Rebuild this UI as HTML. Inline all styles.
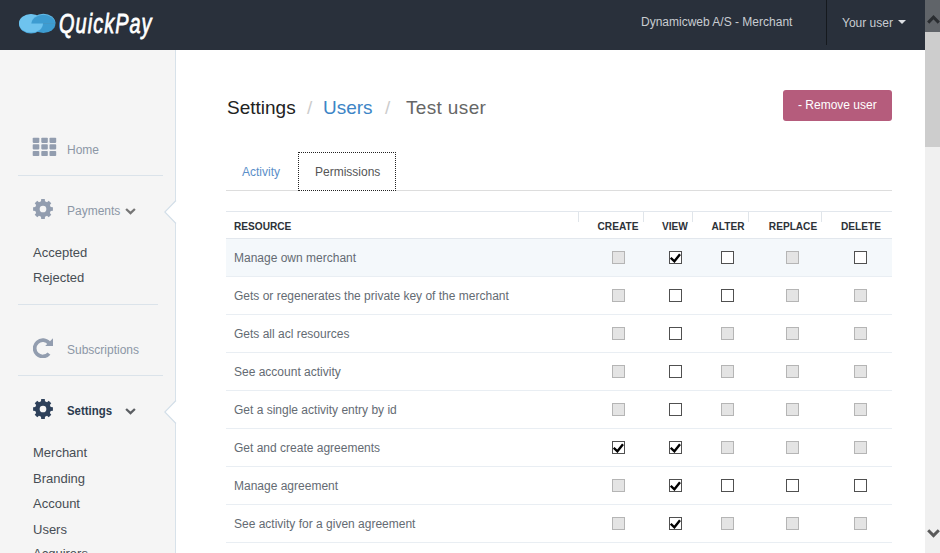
<!DOCTYPE html>
<html><head><meta charset="utf-8">
<style>
*{margin:0;padding:0;box-sizing:border-box}
html,body{width:940px;height:553px;overflow:hidden;background:#fff;font-family:"Liberation Sans",sans-serif}
.abs{position:absolute}
.t{position:absolute;white-space:nowrap;line-height:1}
#hdr{position:absolute;left:0;top:0;width:925px;height:50px;background:#29303b}
#side{position:absolute;left:0;top:50px;width:176px;height:503px;background:#f5f5f5;border-right:1px solid #d8e2ea}
.sep{position:absolute;left:18px;height:1px;background:#dbe3ea}
.nav{position:absolute;left:67px;font-size:12px;color:#8c97a6;white-space:nowrap;line-height:1}
.sub{position:absolute;left:33px;font-size:13px;color:#474d54;white-space:nowrap;line-height:1}
#sb{position:absolute;left:925px;top:0;width:15px;height:553px;background:#f0f0f0}
.row{position:absolute;left:226px;width:666px;height:38px;border-bottom:1px solid #e9eef3}
.rt{position:absolute;left:8px;top:13px;font-size:12px;color:#646b73;white-space:nowrap;line-height:1}
.cb{position:absolute;top:12px;width:13px;height:13px;border:1px solid #505050;background:#fff}
.cb.d{border-color:#b5b5b5;background:#e4e4e4}
.cb svg{position:absolute;left:0;top:0}
.hd{position:absolute;top:221px;width:80px;text-align:center;font-size:11px;font-weight:bold;color:#2d3238;white-space:nowrap;line-height:1;transform:scaleX(0.92)}
.vs{position:absolute;top:212px;width:1px;height:10px;background:#e0e5ea}
</style></head><body>
<div id="hdr">
  <svg class="abs" style="left:18px;top:13px" width="39" height="21" viewBox="0 0 39 21">
    <defs><clipPath id="lo"><rect x="0" y="10.6" width="39" height="12"/></clipPath><clipPath id="up"><rect x="0" y="-1" width="39" height="11.6"/></clipPath></defs>
    <g clip-path="url(#lo)"><ellipse cx="25.4" cy="10.5" rx="12" ry="9.6" fill="#3d9cd1"/></g>
    <ellipse cx="13" cy="11" rx="12" ry="9.4" fill="#4aa5d9"/>
    <ellipse cx="13" cy="10.3" rx="12" ry="9.3" fill="#6ec3ee"/>
    <g clip-path="url(#up)"><ellipse cx="25.4" cy="10.3" rx="12" ry="9.6" fill="#66bde9"/>
    <ellipse cx="25.4" cy="11" rx="12" ry="9.3" fill="#3d9cd1"/></g>
  </svg>
  <div class="t" style="left:59px;top:10px;font-size:28px;font-style:italic;color:#fff;-webkit-text-stroke:0.8px #fff;letter-spacing:1.5px;transform:scaleX(0.71);transform-origin:0 0">QuickPay</div>
  <div class="t" style="left:641px;top:16px;font-size:12px;color:#c8ccd1">Dynamicweb A/S - Merchant</div>
  <div class="abs" style="left:826px;top:0;width:1px;height:45px;background:#15191e"></div>
  <div class="t" style="left:842px;top:17px;font-size:12px;color:#c8ccd1">Your user</div>
  <div class="abs" style="left:898px;top:20px;width:0;height:0;border-left:4px solid transparent;border-right:4px solid transparent;border-top:4px solid #dde0e4"></div>
</div>
<div id="side"></div>
<svg class="abs" style="left:160px;top:190px" width="20" height="250" viewBox="0 0 20 250">
  <polygon points="16.5,10 4.5,22 16.5,34" fill="#fff"/>
  <polyline points="16,10.5 4.8,22 16,33.5" fill="none" stroke="#d2dee8" stroke-width="1.1"/>
  <polygon points="16.5,210 4.5,222 16.5,234" fill="#fff"/>
  <polyline points="16,210.5 4.8,222 16,233.5" fill="none" stroke="#d2dee8" stroke-width="1.1"/>
</svg>
<!-- home grid -->
<svg class="abs" style="left:32px;top:137px" width="25" height="20" viewBox="0 0 25 20" fill="#929daf">
  <rect x="0.7" y="0.7" width="6.6" height="5.2" rx="0.8"/><rect x="9.3" y="0.7" width="6.5" height="5.2" rx="0.8"/><rect x="17.5" y="0.7" width="6.7" height="5.2" rx="0.8"/>
  <rect x="0.7" y="7.2" width="6.6" height="5.2" rx="0.8"/><rect x="9.3" y="7.2" width="6.5" height="5.2" rx="0.8"/><rect x="17.5" y="7.2" width="6.7" height="5.2" rx="0.8"/>
  <rect x="0.7" y="14" width="6.6" height="5.1" rx="0.8"/><rect x="9.3" y="14" width="6.5" height="5.1" rx="0.8"/><rect x="17.5" y="14" width="6.7" height="5.1" rx="0.8"/>
</svg>
<div class="nav" style="top:144px">Home</div>
<div class="sep" style="top:175px;width:145px"></div>
<svg class="abs" style="left:33px;top:199px" width="20" height="20" viewBox="0 0 20 20"><path fill="#929daf" fill-rule="evenodd" d="M8.00 2.30 L8.20 0.10 L11.80 0.10 L12.00 2.30 L14.03 3.14 L15.73 1.73 L18.27 4.27 L16.86 5.97 L17.70 8.00 L19.90 8.20 L19.90 11.80 L17.70 12.00 L16.86 14.03 L18.27 15.73 L15.73 18.27 L14.03 16.86 L12.00 17.70 L11.80 19.90 L8.20 19.90 L8.00 17.70 L5.97 16.86 L4.27 18.27 L1.73 15.73 L3.14 14.03 L2.30 12.00 L0.10 11.80 L0.10 8.20 L2.30 8.00 L3.14 5.97 L1.73 4.27 L4.27 1.73 L5.97 3.14Z M10 6.65 A3.35 3.35 0 1 0 10 13.35 A3.35 3.35 0 1 0 10 6.65Z"/></svg>
<div class="nav" style="top:205px">Payments</div>
<svg class="abs" style="left:124px;top:206px" width="13" height="9" viewBox="0 0 13 9"><polyline points="2.1,3.0 6.5,7.1 10.9,3.0" fill="none" stroke="#767676" stroke-width="2.3"/></svg>
<div class="sub" style="top:246px">Accepted</div>
<div class="sub" style="top:271px">Rejected</div>
<div class="sep" style="top:304px;width:140px"></div>
<svg class="abs" style="left:33px;top:338px" width="20" height="20" viewBox="0 0 20 20"><path d="M16.2 5.3 A8.15 8.15 0 1 0 16 15.6" fill="none" stroke="#929daf" stroke-width="3.7"/><polygon points="12.2,8.1 20,8.1 20,0.3" fill="#929daf"/></svg>
<div class="nav" style="top:344px">Subscriptions</div>
<div class="sep" style="top:375px;width:145px"></div>
<svg class="abs" style="left:33px;top:399px" width="20" height="20" viewBox="0 0 20 20"><path fill="#2d405a" fill-rule="evenodd" d="M8.00 2.30 L8.20 0.10 L11.80 0.10 L12.00 2.30 L14.03 3.14 L15.73 1.73 L18.27 4.27 L16.86 5.97 L17.70 8.00 L19.90 8.20 L19.90 11.80 L17.70 12.00 L16.86 14.03 L18.27 15.73 L15.73 18.27 L14.03 16.86 L12.00 17.70 L11.80 19.90 L8.20 19.90 L8.00 17.70 L5.97 16.86 L4.27 18.27 L1.73 15.73 L3.14 14.03 L2.30 12.00 L0.10 11.80 L0.10 8.20 L2.30 8.00 L3.14 5.97 L1.73 4.27 L4.27 1.73 L5.97 3.14Z M10 6.65 A3.35 3.35 0 1 0 10 13.35 A3.35 3.35 0 1 0 10 6.65Z"/></svg>
<div class="nav" style="top:405px;font-weight:bold;color:#2c3b4e;transform:scaleX(0.95);transform-origin:0 0">Settings</div>
<svg class="abs" style="left:124px;top:406px" width="13" height="9" viewBox="0 0 13 9"><polyline points="2.1,3.0 6.5,7.1 10.9,3.0" fill="none" stroke="#5c5f63" stroke-width="2.3"/></svg>
<div class="sub" style="top:446px">Merchant</div>
<div class="sub" style="top:472px">Branding</div>
<div class="sub" style="top:497px">Account</div>
<div class="sub" style="top:523px">Users</div>
<div class="sub" style="top:547px">Acquirers</div>

<!-- main -->
<div class="t" style="left:227px;top:98px;font-size:19px;color:#222">Settings</div>
<div class="t" style="left:307px;top:98px;font-size:19px;color:#ccc">/</div>
<div class="t" style="left:323px;top:98px;font-size:19px;color:#3d85c6">Users</div>
<div class="t" style="left:385px;top:98px;font-size:19px;color:#ccc">/</div>
<div class="t" style="left:406px;top:98px;font-size:19px;color:#666;letter-spacing:0.35px">Test user</div>

<div class="abs" style="left:783px;top:90px;width:109px;height:31px;background:#b55c7c;border-radius:3px"></div>
<div class="t" style="left:798px;top:99px;font-size:12px;color:#fff">- Remove user</div>

<div class="abs" style="left:226px;top:190px;width:666px;height:1px;background:#dddddd"></div>
<div class="t" style="left:242px;top:166px;font-size:12px;color:#5b8fc9">Activity</div>
<div class="abs" style="left:298px;top:152px;width:98px;height:39px;background:#fff;border:1px dotted #222"></div>
<div class="t" style="left:315px;top:166px;font-size:12px;color:#555">Permissions</div>

<div class="abs" style="left:226px;top:211px;width:666px;height:1px;background:#e2e7ed"></div>
<div class="abs" style="left:226px;top:238px;width:666px;height:1px;background:#e2e7ed"></div>
<div class="hd" style="left:234px;text-align:left;transform-origin:0 0">RESOURCE</div>
<div class="hd" style="left:578px">CREATE</div>
<div class="hd" style="left:635px">VIEW</div>
<div class="hd" style="left:688px">ALTER</div>
<div class="hd" style="left:753px">REPLACE</div>
<div class="hd" style="left:821px">DELETE</div>
<div class="vs" style="left:578px"></div>
<div class="vs" style="left:643px"></div>
<div class="vs" style="left:692px"></div>
<div class="vs" style="left:748px"></div>
<div class="vs" style="left:821px"></div>

<!--ROWS--><div class="row" style="top:239px;background:#f4f8fb;"><div class="rt">Manage own merchant</div><div class="cb d" style="left:386px"></div><div class="cb" style="left:443px"><svg class="abs" style="left:0;top:0" width="11" height="11" viewBox="0 0 11 11"><path d="M0.7 5.8 L4.4 9.3 L10 2.3" fill="none" stroke="#000" stroke-width="2.4"/></svg></div><div class="cb" style="left:495px"></div><div class="cb d" style="left:560px"></div><div class="cb" style="left:628px"></div></div>
<div class="row" style="top:277px;"><div class="rt">Gets or regenerates the private key of the merchant</div><div class="cb d" style="left:386px"></div><div class="cb" style="left:443px"></div><div class="cb" style="left:495px"></div><div class="cb d" style="left:560px"></div><div class="cb d" style="left:628px"></div></div>
<div class="row" style="top:315px;"><div class="rt">Gets all acl resources</div><div class="cb d" style="left:386px"></div><div class="cb" style="left:443px"></div><div class="cb d" style="left:495px"></div><div class="cb d" style="left:560px"></div><div class="cb d" style="left:628px"></div></div>
<div class="row" style="top:353px;"><div class="rt">See account activity</div><div class="cb d" style="left:386px"></div><div class="cb" style="left:443px"></div><div class="cb d" style="left:495px"></div><div class="cb d" style="left:560px"></div><div class="cb d" style="left:628px"></div></div>
<div class="row" style="top:391px;"><div class="rt">Get a single activity entry by id</div><div class="cb d" style="left:386px"></div><div class="cb" style="left:443px"></div><div class="cb d" style="left:495px"></div><div class="cb d" style="left:560px"></div><div class="cb d" style="left:628px"></div></div>
<div class="row" style="top:429px;"><div class="rt">Get and create agreements</div><div class="cb" style="left:386px"><svg class="abs" style="left:0;top:0" width="11" height="11" viewBox="0 0 11 11"><path d="M0.7 5.8 L4.4 9.3 L10 2.3" fill="none" stroke="#000" stroke-width="2.4"/></svg></div><div class="cb" style="left:443px"><svg class="abs" style="left:0;top:0" width="11" height="11" viewBox="0 0 11 11"><path d="M0.7 5.8 L4.4 9.3 L10 2.3" fill="none" stroke="#000" stroke-width="2.4"/></svg></div><div class="cb d" style="left:495px"></div><div class="cb d" style="left:560px"></div><div class="cb d" style="left:628px"></div></div>
<div class="row" style="top:467px;"><div class="rt">Manage agreement</div><div class="cb d" style="left:386px"></div><div class="cb" style="left:443px"><svg class="abs" style="left:0;top:0" width="11" height="11" viewBox="0 0 11 11"><path d="M0.7 5.8 L4.4 9.3 L10 2.3" fill="none" stroke="#000" stroke-width="2.4"/></svg></div><div class="cb" style="left:495px"></div><div class="cb" style="left:560px"></div><div class="cb" style="left:628px"></div></div>
<div class="row" style="top:505px;"><div class="rt">See activity for a given agreement</div><div class="cb d" style="left:386px"></div><div class="cb" style="left:443px"><svg class="abs" style="left:0;top:0" width="11" height="11" viewBox="0 0 11 11"><path d="M0.7 5.8 L4.4 9.3 L10 2.3" fill="none" stroke="#000" stroke-width="2.4"/></svg></div><div class="cb d" style="left:495px"></div><div class="cb d" style="left:560px"></div><div class="cb d" style="left:628px"></div></div>
<div class="row" style="top:543px;"><div class="rt">Manage own merchant</div><div class="cb d" style="left:386px"></div><div class="cb d" style="left:443px"></div><div class="cb d" style="left:495px"></div><div class="cb d" style="left:560px"></div><div class="cb d" style="left:628px"></div></div><!--/ROWS-->

<div id="sb">
  <div class="abs" style="left:0;top:0;width:15px;height:32px;background:#606469"></div>
  <svg class="abs" style="left:0;top:12px" width="15" height="14" viewBox="0 0 15 14"><polyline points="3.2,10.6 8.5,5.2 13.8,10.6" fill="none" stroke="#2a2d31" stroke-width="3"/></svg>
  <div class="abs" style="left:0;top:32px;width:15px;height:115px;background:#cdcdcd"></div>
  <svg class="abs" style="left:0;top:526px" width="15" height="14" viewBox="0 0 15 14"><polyline points="3.2,4.3 8.5,9.6 13.8,4.3" fill="none" stroke="#5a5a5a" stroke-width="3"/></svg>
</div>
</body></html>
